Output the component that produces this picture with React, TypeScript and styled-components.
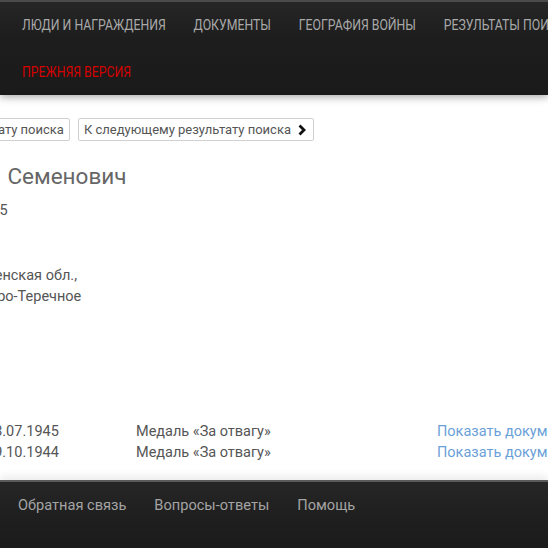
import * as React from 'react';
import styled, { createGlobalStyle } from 'styled-components';

const GlobalStyle = createGlobalStyle`
    html, body {
        margin: 0;
        padding: 0;
        background: #fff;
    }
    body {
        font-family: Roboto, "Noto Sans", "Liberation Sans", sans-serif;
        font-size: 14.5px;
        color: #555;
        overflow: hidden;
    }
`;

const Page = styled.div`
    width: 548px;
    height: 548px;
    overflow: hidden;
    display: flex;
    flex-direction: column;
`;

const Header = styled.header`
    flex: none;
    height: 93px;
    border-top: 2px solid #4a4a4a;
    background: linear-gradient(180deg, #262626 0%, #1d1d1d 40%, #1a1a1a 100%);
    box-shadow: 0 2px 8px rgba(0, 0, 0, 0.35);
    position: relative;
    z-index: 1;
    overflow: hidden;
`;

/* the site uses a condensed face; Roboto squeezed to match */
const NavRow = styled.nav`
    height: 47px;
    display: flex;
    align-items: center;
    padding-left: 10px;
    white-space: nowrap;
    transform: scaleX(0.818);
    transform-origin: left center;
    &:first-child {
        height: 46px;
    }
`;

const NavLink = styled.a<{ $accent?: boolean }>`
    padding: 0 17px;
    font-size: 15px;
    text-transform: uppercase;
    text-decoration: none;
    color: ${p => (p.$accent ? '#d40000' : '#a9a9a9')};
`;

const Main = styled.main`
    flex: none;
    height: 385px;
    display: flex;
    flex-direction: column;
    white-space: nowrap;
`;

const Toolbar = styled.div`
    display: flex;
    gap: 8px;
    margin-top: 23px;
    margin-left: -174px;
`;

const PagerButton = styled.button`
    display: flex;
    align-items: center;
    gap: 5px;
    height: 23px;
    padding: 0 5px;
    border: 1px solid #d0d0d0;
    border-radius: 2px;
    background: #fff;
    font-family: Roboto, "Noto Sans", sans-serif;
    font-size: 13px;
    color: #555;
    svg {
        width: 12px;
        height: 12px;
    }
`;

const Name = styled.h1<{ $shift: number }>`
    margin: 20px 0 0 ${p => p.$shift}px;
    font-size: 22.5px;
    line-height: 30px;
    font-weight: 400;
    color: #666;
    display: flex;
    gap: 7px;
`;

const NamePart = styled.span<{ $lead?: boolean }>`
    color: ${p => (p.$lead ? '#5b8fc8' : '#666')};
`;

const Line = styled.div<{ $shift: number; $gap?: number }>`
    margin: ${p => p.$gap ?? 0}px 0 0 ${p => p.$shift}px;
    line-height: 21px;
    color: #555;
`;

const Awards = styled.div`
    display: grid;
    grid-template-columns: 150px 301px 1fr;
    margin-top: 114px;
    margin-left: -14px;
    line-height: 21px;
`;

const Cell = styled.div<{ $link?: boolean }>`
    color: ${p => (p.$link ? '#6b9fd8' : '#555')};
`;

const Footer = styled.footer`
    flex: 1;
    border-top: 2px solid #5a5a5a;
    background: linear-gradient(180deg, #262626 0%, #1f1f1f 50%, #1b1b1b 100%);
    box-shadow: 0 -4px 8px rgba(0, 0, 0, 0.08);
    display: flex;
    align-items: flex-start;
    padding: 14px 0 0 4px;
    white-space: nowrap;
`;

const FooterLink = styled.a`
    padding: 0 14px;
    font-size: 14.6px;
    color: #a4a4a4;
    text-decoration: none;
`;

const ChevronLeft = () => (
    <svg viewBox="0 0 12 12" aria-hidden="true">
        <path d="M8.5 1.5 L4 6 L8.5 10.5" fill="none" stroke="#111" strokeWidth="2.8" />
    </svg>
);

const ChevronRight = () => (
    <svg viewBox="0 0 12 12" aria-hidden="true">
        <path d="M3.5 1.5 L8 6 L3.5 10.5" fill="none" stroke="#111" strokeWidth="2.8" />
    </svg>
);

const awards = [
    { date: '23.07.1945', name: 'Медаль «За отвагу»' },
    { date: '29.10.1944', name: 'Медаль «За отвагу»' }
];

export default function App() {
    return (
        <>
            <GlobalStyle />
            <Page>
                <Header>
                    <NavRow>
                        <NavLink>Люди и награждения</NavLink>
                        <NavLink>Документы</NavLink>
                        <NavLink>География войны</NavLink>
                        <NavLink>Результаты поиска</NavLink>
                    </NavRow>
                    <NavRow>
                        <NavLink $accent>Прежняя версия</NavLink>
                    </NavRow>
                </Header>
                <Main>
                    <Toolbar>
                        <PagerButton>
                            <ChevronLeft />К предыдущему результату поиска
                        </PagerButton>
                        <PagerButton>
                            К следующему результату поиска
                            <ChevronRight />
                        </PagerButton>
                    </Toolbar>
                    <Name $shift={-66}>
                        <NamePart $lead>Ивана</NamePart>
                        <NamePart>Семенович</NamePart>
                    </Name>
                    <Line $shift={-25} $gap={9}>
                        1925
                    </Line>
                    <Line $shift={-42} $gap={44}>
                        Смоленская обл.,
                        <br />
                        с. Старо-Теречное
                    </Line>
                    <Awards>
                        {awards.map(a => (
                            <React.Fragment key={a.date}>
                                <Cell>{a.date}</Cell>
                                <Cell>{a.name}</Cell>
                                <Cell $link>Показать документ о награждении</Cell>
                            </React.Fragment>
                        ))}
                    </Awards>
                </Main>
                <Footer>
                    <FooterLink>Обратная связь</FooterLink>
                    <FooterLink>Вопросы-ответы</FooterLink>
                    <FooterLink>Помощь</FooterLink>
                </Footer>
            </Page>
        </>
    );
}
